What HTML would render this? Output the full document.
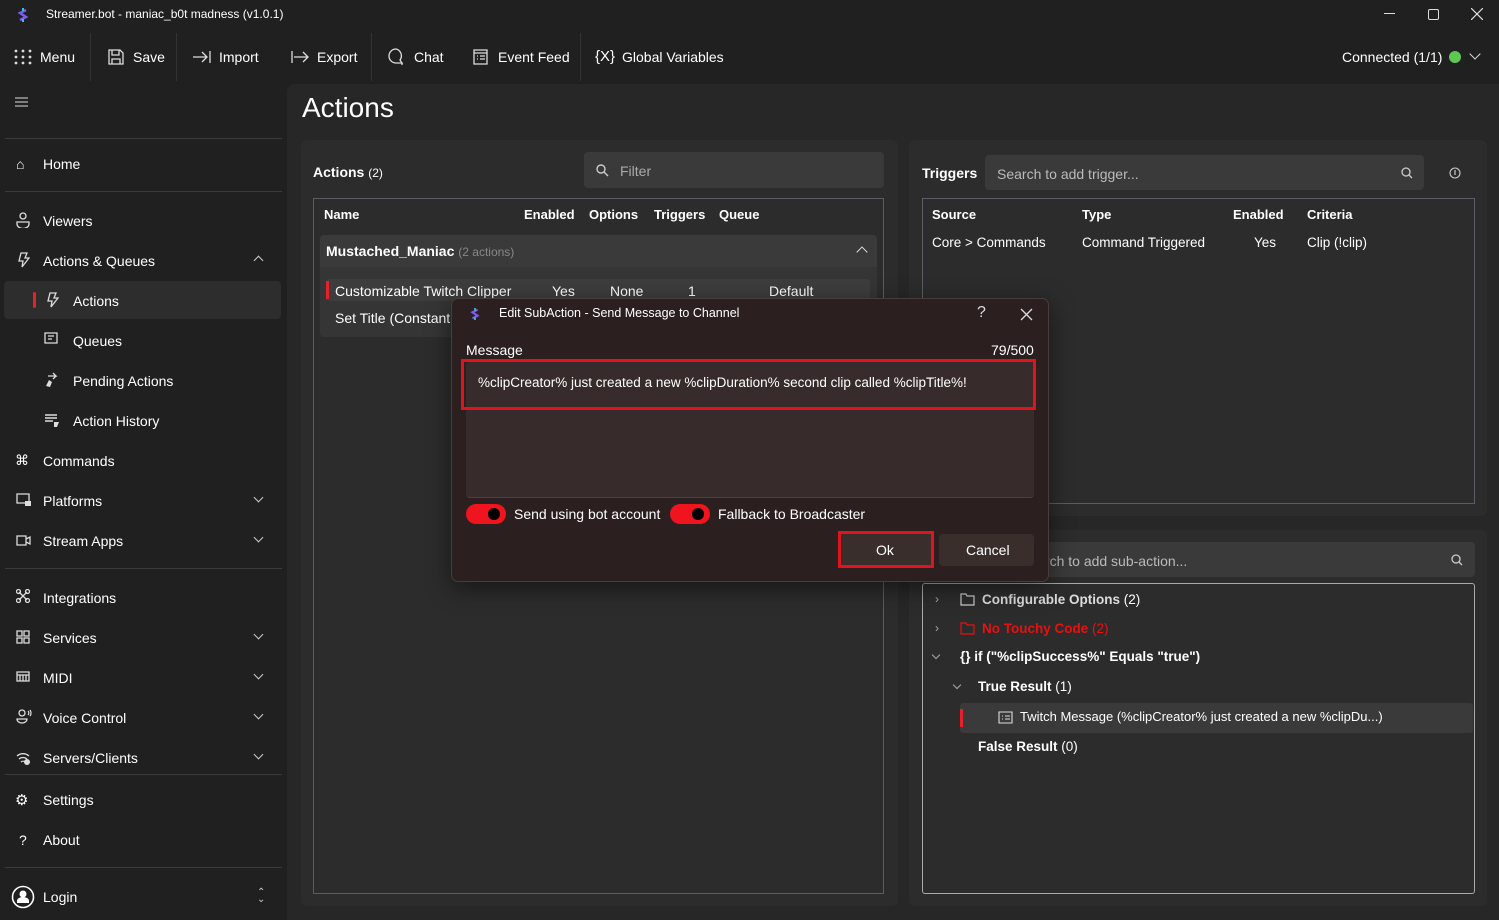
<!DOCTYPE html>
<html><head><meta charset="utf-8"><style>
*{box-sizing:border-box;margin:0;padding:0}
body{width:1499px;height:920px;background:#202020;font-family:"Liberation Sans",sans-serif;color:#fff;font-size:14px;position:relative;overflow:hidden}
.a{position:absolute;white-space:nowrap}
.b{font-weight:bold}
.g{color:#999}
svg{position:absolute}
.ic{stroke:#ddd;fill:none;stroke-width:1.3}
.sep{position:absolute;left:5px;width:277px;height:1px;background:#3a3a3a}
.chev{position:absolute;left:255px;width:7px;height:7px;border-right:1.3px solid #ccc;border-bottom:1.3px solid #ccc;transform:rotate(45deg)}
</style></head><body>
<svg style="left:16px;top:7px" width="14" height="16" viewBox="0 0 14 16"><path d="M10 3 L4 6 L10 10 L4 13" stroke="#7b5cf0" stroke-width="2.5" fill="none"/><path d="M7 1v3M7 12v3" stroke="#2bc4e8" stroke-width="2"/></svg>
<div class="a" style="left:46px;top:7px;font-size:12px">Streamer.bot - maniac_b0t madness (v1.0.1)</div>
<div class="a" style="left:1384px;top:13px;width:11px;height:1px;background:#ddd"></div>
<div class="a" style="left:1428px;top:9px;width:11px;height:11px;border:1.2px solid #ddd;border-radius:2px"></div>
<svg style="left:1471px;top:8px" width="12" height="12"><path d="M0 0L12 12M12 0L0 12" stroke="#ddd" stroke-width="1.2"/></svg>
<svg style="left:14px;top:49px" width="18" height="16"><g fill="#ddd"><circle cx="2" cy="2" r="1.4"/><circle cx="9" cy="2" r="1.4"/><circle cx="16" cy="2" r="1.4"/><circle cx="2" cy="8" r="1.4"/><circle cx="9" cy="8" r="1.4"/><circle cx="16" cy="8" r="1.4"/><circle cx="2" cy="14" r="1.4"/><circle cx="9" cy="14" r="1.4"/><circle cx="16" cy="14" r="1.4"/></g></svg>
<div class="a" style="left:40px;top:49px">Menu</div>
<div class="a" style="left:90px;top:33px;width:1px;height:48px;background:#333"></div>
<svg style="left:107px;top:48px" width="18" height="18"><path class="ic" d="M2 2h11l3 3v11H2z M5 2v5h7V2 M5 16v-5h8v5"/></svg>
<div class="a" style="left:133px;top:49px">Save</div>
<div class="a" style="left:176px;top:33px;width:1px;height:48px;background:#333"></div>
<svg style="left:192px;top:48px" width="20" height="18"><path class="ic" d="M1 9h14M10 4l5 5-5 5M18 3v12"/></svg>
<div class="a" style="left:219px;top:49px">Import</div>
<svg style="left:290px;top:48px" width="20" height="18"><path class="ic" d="M2 3v12M4 9h14M13 4l5 5-5 5"/></svg>
<div class="a" style="left:317px;top:49px">Export</div>
<div class="a" style="left:371px;top:33px;width:1px;height:48px;background:#333"></div>
<svg style="left:387px;top:47px" width="20" height="20"><path class="ic" d="M9 2a7 7 0 1 0 0 14h6l-2-3a7 7 0 0 0-4-11z M15 16v2"/></svg>
<div class="a" style="left:414px;top:49px">Chat</div>
<svg style="left:472px;top:48px" width="17" height="18"><path class="ic" d="M2 2h13v14H2z M2 5h13 M5 8h1M8 8h5M5 11h1M8 11h5"/></svg>
<div class="a" style="left:498px;top:49px">Event Feed</div>
<div class="a" style="left:580px;top:33px;width:1px;height:48px;background:#333"></div>
<div class="a" style="left:595px;top:48px;font-size:15px">{X}</div>
<div class="a" style="left:622px;top:49px">Global Variables</div>
<div class="a" style="left:1342px;top:49px">Connected (1/1)</div>
<div class="a" style="left:1449px;top:51px;width:12px;height:12px;border-radius:50%;background:#5cc852"></div>
<div class="a" style="left:1471px;top:50px;width:8px;height:8px;border-right:1.5px solid #ddd;border-bottom:1.5px solid #ddd;transform:rotate(45deg)"></div>
<svg style="left:15px;top:97px" width="14" height="11"><path d="M0 1h13M0 5h13M0 9h13" stroke="#ddd" stroke-width="1.1"/></svg>
<div class="sep" style="top:138px"></div>
<div class="a" style="left:16px;top:156px;font-size:14px">⌂</div><div class="a" style="left:43px;top:156px">Home</div>
<div class="sep" style="top:191px"></div>
<svg style="left:16px;top:212px" width="14" height="16"><path class="ic" d="M7 1a3 3 0 1 1 0 6a3 3 0 1 1 0-6M1 10h12v2a4 3 0 0 1-12 0z"/></svg><div class="a" style="left:43px;top:213px">Viewers</div>
<svg style="left:16px;top:252px" width="14" height="16"><path class="ic" d="M5 1h6l-2 5h4l-7 9 1-6H3z"/></svg><div class="a" style="left:43px;top:253px">Actions &amp; Queues</div>
<div class="chev" style="top:257px;transform:rotate(-135deg)"></div>
<div class="a" style="left:4px;top:281px;width:277px;height:38px;background:#2d2d2d;border-radius:4px"></div>
<div class="a" style="left:33px;top:292px;width:3px;height:16px;background:#e8202a;border-radius:2px"></div>
<svg style="left:45px;top:292px" width="14" height="16"><path class="ic" d="M5 1h6l-2 5h4l-7 9 1-6H3z"/></svg><div class="a" style="left:73px;top:293px">Actions</div>
<svg style="left:44px;top:332px" width="16" height="14"><path class="ic" d="M1 1h12v10H1z M4 4h6M4 7h4"/></svg><div class="a" style="left:73px;top:333px">Queues</div>
<svg style="left:44px;top:372px" width="16" height="16"><path class="ic" d="M4 4h8l-3-3M12 4l-3 3"/><path d="M2 14l3-6 3 2-2 5z" fill="#ddd"/></svg><div class="a" style="left:73px;top:373px">Pending Actions</div>
<svg style="left:44px;top:413px" width="16" height="16"><path d="M1 2h12M1 5h12M1 8h8" stroke="#ddd" stroke-width="1.5"/><path d="M10 9h5l-2 5h-3z" fill="#ddd"/></svg><div class="a" style="left:73px;top:413px">Action History</div>
<div class="a" style="left:15px;top:452px;font-size:14px">⌘</div><div class="a" style="left:43px;top:453px">Commands</div>
<svg style="left:16px;top:493px" width="16" height="14"><path class="ic" d="M1 1h12v9H1z"/><rect x="9" y="8" width="6" height="5" fill="#ddd"/></svg><div class="a" style="left:43px;top:493px">Platforms</div><div class="chev" style="top:494px"></div>
<svg style="left:16px;top:535px" width="16" height="12"><path class="ic" d="M1 1h9v9H1z M10 4l4-2v7l-4-2"/></svg><div class="a" style="left:43px;top:533px">Stream Apps</div><div class="chev" style="top:534px"></div>
<div class="sep" style="top:568px"></div>
<svg style="left:16px;top:589px" width="14" height="14"><path class="ic" d="M3 3l8 8M11 3l-8 8"/><g class="ic"><circle cx="2.5" cy="2.5" r="2"/><circle cx="11.5" cy="2.5" r="2"/><circle cx="2.5" cy="11.5" r="2"/><circle cx="11.5" cy="11.5" r="2"/></g></svg><div class="a" style="left:43px;top:590px">Integrations</div>
<svg style="left:16px;top:630px" width="14" height="14"><path class="ic" d="M1 1h5v5H1zM8 1h5v5H8zM1 8h5v5H1zM8 8h5v5H8z"/></svg><div class="a" style="left:43px;top:630px">Services</div><div class="chev" style="top:631px"></div>
<svg style="left:16px;top:671px" width="14" height="12"><path class="ic" d="M1 1h12v9H1z M1 4h12 M4 4v6M7 4v6M10 4v6"/></svg><div class="a" style="left:43px;top:670px">MIDI</div><div class="chev" style="top:671px"></div>
<svg style="left:16px;top:709px" width="16" height="16"><path class="ic" d="M6 1a3 3 0 1 1 0 6a3 3 0 1 1 0-6M1 10h10a5 4 0 0 1-10 0z M12 2a3 3 0 0 1 0 4M14 1a5 5 0 0 1 0 6"/></svg><div class="a" style="left:43px;top:710px">Voice Control</div><div class="chev" style="top:711px"></div>
<svg style="left:16px;top:750px" width="16" height="16"><path class="ic" d="M1 6a9 9 0 0 1 12 0M3 9a6 6 0 0 1 8 0M5 12a3 3 0 0 1 4 0"/><circle cx="11" cy="12" r="3" fill="#ddd"/></svg><div class="a" style="left:43px;top:750px">Servers/Clients</div><div class="chev" style="top:751px"></div>
<div class="sep" style="top:774px"></div>
<div class="a" style="left:15px;top:791px;font-size:15px">⚙</div><div class="a" style="left:43px;top:792px">Settings</div>
<div class="a" style="left:19px;top:832px">?</div><div class="a" style="left:43px;top:832px">About</div>
<div class="sep" style="top:867px"></div>
<svg style="left:11px;top:885px" width="24" height="24"><circle cx="12" cy="12" r="10.5" stroke="#fff" stroke-width="1.6" fill="none"/><circle cx="12" cy="9" r="3.5" fill="#fff"/><path d="M6 16a6 4 0 0 1 12 0v2H6z" fill="#fff"/></svg>
<div class="a" style="left:43px;top:889px">Login</div>
<div class="a" style="left:257px;top:889px;font-size:10px;line-height:7px;color:#ccc">⌃<br>⌄</div>
<div class="a" style="left:287px;top:84px;width:1212px;height:836px;background:#272727;border-top-left-radius:8px"></div>
<div class="a" style="left:302px;top:92px;font-size:28px">Actions</div>
<div class="a" style="left:301px;top:140px;width:597px;height:766px;background:#2c2c2c;border-radius:6px"></div>
<div class="a" style="left:313px;top:164px"><span class="b">Actions</span> <span style="font-size:12px">(2)</span></div>
<div class="a" style="left:584px;top:152px;width:300px;height:36px;background:#3a3a3a;border-radius:4px"></div>
<svg style="left:596px;top:164px" width="13" height="13"><circle cx="5" cy="5" r="4" stroke="#ccc" stroke-width="1.4" fill="none"/><path d="M8 8l4 4" stroke="#ccc" stroke-width="1.4"/></svg>
<div class="a g" style="left:620px;top:163px;color:#aaa">Filter</div>
<div class="a" style="left:313px;top:198px;width:571px;height:696px;border:1px solid #5c5c66"></div>
<div class="a b" style="left:324px;top:207px;font-size:13px">Name</div>
<div class="a b" style="left:524px;top:207px;font-size:13px">Enabled</div>
<div class="a b" style="left:589px;top:207px;font-size:13px">Options</div>
<div class="a b" style="left:654px;top:207px;font-size:13px">Triggers</div>
<div class="a b" style="left:719px;top:207px;font-size:13px">Queue</div>
<div class="a" style="left:320px;top:235px;width:557px;height:102px;background:#353535;border-radius:4px"></div>
<div class="a" style="left:320px;top:235px;width:557px;height:32px;background:#3a3a3a;border-radius:4px 4px 0 0"></div>
<div class="a" style="left:326px;top:243px"><span class="b">Mustached_Maniac</span> <span class="g" style="font-size:12px;color:#888">(2 actions)</span></div>
<div class="a" style="left:858px;top:248px;width:8px;height:8px;border-left:1.5px solid #ddd;border-top:1.5px solid #ddd;transform:rotate(45deg)"></div>
<div class="a" style="left:326px;top:279px;width:544px;height:22px;background:#3d3d3d;border-radius:3px"></div>
<div class="a" style="left:326px;top:281px;width:3px;height:18px;background:#e8202a"></div>
<div class="a" style="left:335px;top:283px">Customizable Twitch Clipper</div>
<div class="a" style="left:552px;top:283px">Yes</div>
<div class="a" style="left:610px;top:283px">None</div>
<div class="a" style="left:688px;top:283px">1</div>
<div class="a" style="left:769px;top:283px">Default</div>
<div class="a" style="left:335px;top:310px">Set Title (Constant</div>
<div class="a" style="left:909px;top:140px;width:578px;height:376px;background:#2c2c2c;border-radius:6px"></div>
<div class="a b" style="left:922px;top:165px">Triggers</div>
<div class="a" style="left:985px;top:155px;width:439px;height:35px;background:#3a3a3a;border-radius:4px"></div>
<div class="a" style="left:997px;top:166px;color:#bbb">Search to add trigger...</div>
<svg style="left:1401px;top:167px" width="12" height="12"><circle cx="5" cy="5" r="4" stroke="#ccc" stroke-width="1.3" fill="none"/><path d="M8 8l3 3" stroke="#ccc" stroke-width="1.3"/></svg>
<svg style="left:1449px;top:167px" width="12" height="12"><circle cx="6" cy="6" r="5" stroke="#ccc" stroke-width="1.1" fill="none"/><path d="M6 3v5" stroke="#ccc" stroke-width="1.2"/></svg>
<div class="a" style="left:922px;top:198px;width:553px;height:306px;border:1px solid #5c5c66"></div>
<div class="a b" style="left:932px;top:207px;font-size:13px">Source</div>
<div class="a b" style="left:1082px;top:207px;font-size:13px">Type</div>
<div class="a b" style="left:1233px;top:207px;font-size:13px">Enabled</div>
<div class="a b" style="left:1307px;top:207px;font-size:13px">Criteria</div>
<div class="a" style="left:932px;top:235px;font-size:13.5px">Core &gt; Commands</div>
<div class="a" style="left:1082px;top:235px;font-size:13.5px">Command Triggered</div>
<div class="a" style="left:1254px;top:235px;font-size:13.5px">Yes</div>
<div class="a" style="left:1307px;top:235px;font-size:13.5px">Clip (!clip)</div>
<div class="a" style="left:909px;top:530px;width:578px;height:376px;background:#2c2c2c;border-radius:6px"></div>
<div class="a" style="left:985px;top:542px;width:490px;height:35px;background:#3a3a3a;border-radius:4px"></div>
<div class="a" style="left:1020px;top:553px;color:#bbb">Search to add sub-action...</div>
<svg style="left:1451px;top:554px" width="12" height="12"><circle cx="5" cy="5" r="4" stroke="#ccc" stroke-width="1.3" fill="none"/><path d="M8 8l3 3" stroke="#ccc" stroke-width="1.3"/></svg>
<div class="a" style="left:922px;top:583px;width:553px;height:311px;border:1px solid #aaa;border-radius:3px"></div>
<div class="a" style="left:935px;top:592px;color:#aaa;font-size:12px">›</div>
<svg style="left:960px;top:593px" width="15" height="13"><path d="M1 1h5l1 2h7v9H1z" stroke="#ccc" stroke-width="1.2" fill="none"/></svg>
<div class="a" style="left:982px;top:592px;font-size:13.5px"><span class="b" style="color:#ddd">Configurable Options</span> (2)</div>
<div class="a" style="left:935px;top:621px;color:#aaa;font-size:12px">›</div>
<svg style="left:960px;top:622px" width="15" height="13"><path d="M1 1h5l1 2h7v9H1z" stroke="#e81010" stroke-width="1.2" fill="none"/></svg>
<div class="a" style="left:982px;top:621px;font-size:13.5px;color:#e81010"><span class="b">No Touchy Code</span> (2)</div>
<div class="a" style="left:933px;top:652px;width:6px;height:6px;border-right:1.2px solid #aaa;border-bottom:1.2px solid #aaa;transform:rotate(45deg)"></div>
<div class="a b" style="left:960px;top:649px;font-size:13.5px">{} if ("%clipSuccess%" Equals "true")</div>
<div class="a" style="left:954px;top:682px;width:6px;height:6px;border-right:1.2px solid #aaa;border-bottom:1.2px solid #aaa;transform:rotate(45deg)"></div>
<div class="a" style="left:978px;top:679px;font-size:13.5px"><span class="b">True Result</span> (1)</div>
<div class="a" style="left:960px;top:703px;width:513px;height:30px;background:#3a3a3a;border-radius:3px"></div>
<div class="a" style="left:960px;top:709px;width:3px;height:18px;background:#e8202a"></div>
<svg style="left:998px;top:711px" width="15" height="13"><path d="M1 1h13v11H1z M4 5h1M7 5h5M4 8h1M7 8h5" stroke="#ddd" stroke-width="1.1" fill="none"/></svg>
<div class="a" style="left:1020px;top:709px;font-size:13px">Twitch Message (%clipCreator% just created a new %clipDu...)</div>
<div class="a" style="left:978px;top:739px;font-size:13.5px"><span class="b">False Result</span> (0)</div>
<div class="a" style="left:451px;top:298px;width:598px;height:284px;background:#2b1f1f;border:1px solid #4a3c3c;border-radius:7px;box-shadow:0 6px 24px rgba(0,0,0,.5)"></div>
<svg style="left:469px;top:306px" width="12" height="16" viewBox="0 0 14 16"><path d="M10 3 L4 6 L10 10 L4 13" stroke="#7b5cf0" stroke-width="2.5" fill="none"/><path d="M7 1v3M7 12v3" stroke="#2bc4e8" stroke-width="2"/></svg>
<div class="a" style="left:499px;top:306px;font-size:12.5px">Edit SubAction - Send Message to Channel</div>
<div class="a" style="left:977px;top:304px;font-size:16px;color:#ddd">?</div>
<svg style="left:1020px;top:308px" width="13" height="13"><path d="M1 1L12 12M12 1L1 12" stroke="#ddd" stroke-width="1.3"/></svg>
<div class="a" style="left:466px;top:342px">Message</div>
<div class="a" style="left:991px;top:342px">79/500</div>
<div class="a" style="left:466px;top:362px;width:568px;height:136px;background:#372c2b;border-radius:4px;border-bottom:1px solid #4a4040"></div>
<div class="a" style="left:461px;top:359px;width:575px;height:51px;border:3px solid #e0141c"></div>
<div class="a" style="left:478px;top:375px;font-size:13.5px">%clipCreator% just created a new %clipDuration% second clip called %clipTitle%!</div>
<div class="a" style="left:466px;top:504px;width:40px;height:20px;background:#f0141e;border-radius:10px"></div>
<div class="a" style="left:488px;top:508px;width:12px;height:12px;background:#000;border-radius:50%"></div>
<div class="a" style="left:514px;top:506px">Send using bot account</div>
<div class="a" style="left:670px;top:504px;width:40px;height:20px;background:#f0141e;border-radius:10px"></div>
<div class="a" style="left:692px;top:508px;width:12px;height:12px;background:#000;border-radius:50%"></div>
<div class="a" style="left:718px;top:506px">Fallback to Broadcaster</div>
<div class="a" style="left:838px;top:531px;width:96px;height:37px;background:#3a2e2d;border:3px solid #e0141c"></div>
<div class="a" style="left:876px;top:542px">Ok</div>
<div class="a" style="left:939px;top:534px;width:95px;height:32px;background:#3a2e2d;border-radius:4px"></div>
<div class="a" style="left:966px;top:542px">Cancel</div>
</body></html>
